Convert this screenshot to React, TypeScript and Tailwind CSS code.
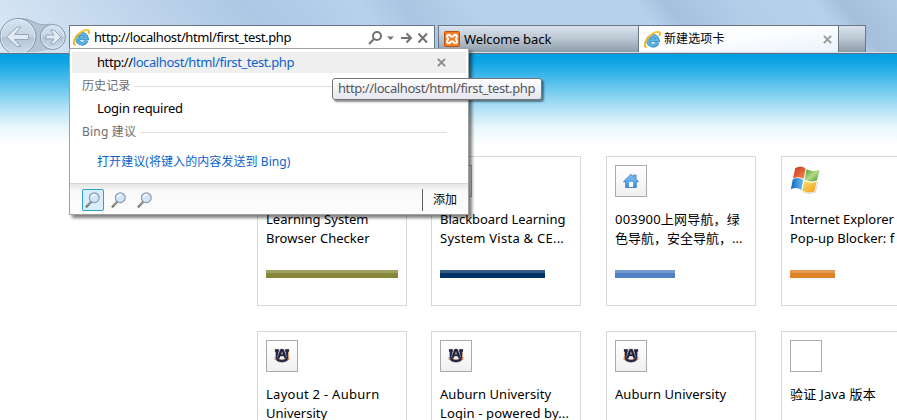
import React from 'react';

const FONT = "font-['Noto_Sans','Noto_Sans_CJK_SC',sans-serif]";

function IeIcon() {
  return (
    <svg width="17" height="17" viewBox="0 0 17 17" className="shrink-0">
      <path d="M13.6 11.6A4.900 4.900 0 1 1 13.9 9.300H5.2" fill="none" stroke="#2f86bd" strokeWidth="3.7" />
      <path d="M13.4 11.500A4.900 4.900 0 1 1 13.700 9.300H5.2" fill="none" stroke="#5fb6e4" strokeWidth="2.2" />
      <path d="M2.6 15.8C-.8 16 .6 9.6 5.3 5.2C9.6 1.1 15.2-.4 15.9 2.1C16.1 3 15.8 4 15.3 5" fill="none" stroke="#f3b51b" strokeWidth="1.9" />
      <path d="M5.5 4.7C9.5 1.2 14-.1 15.2 1.4" fill="none" stroke="#ffdf5c" strokeWidth=".9" />
    </svg>
  );
}

function XamppIcon() {
  return (
    <svg width="16" height="16" viewBox="0 0 16 16" className="shrink-0">
      <rect x=".5" y=".5" width="15" height="15" rx="1" fill="#f47b20" stroke="#bd5110" />
      <path d="M5.6 3.800C3.400 3.400 2.600 4.800 3.300 6.300L4.200 8L3.300 9.700C2.600 11.200 3.400 12.600 5.600 12.200L6.800 10.500H9.200L10.400 12.200C12.600 12.600 13.400 11.200 12.700 9.700L11.800 8L12.700 6.300C13.400 4.800 12.600 3.400 10.400 3.800L9.200 5.500H6.800Z" fill="none" stroke="#fff" strokeWidth="2" strokeLinejoin="round" />
    </svg>
  );
}

function AuburnIcon() {
  return (
    <svg width="16" height="16" viewBox="0 0 16 16">
      <g fill="none" strokeLinejoin="round">
        <path d="M.8 2.5H4.8M11.2 2.5H15.2M2.8 3V9.500Q2.8 13 8 13T13.2 9.500V3M4.3 9.8L7.2 2.3H8.8L11.7 9.8M.6 10.400H5.500M10.500 10.400H15.400" stroke="#d8936c" strokeWidth="3.200" />
        <path d="M1 2.500H4.800M11.200 2.500H15M3.100 3V9.500Q3.100 13 8 13T12.900 9.500V3" stroke="#1b2c50" strokeWidth="2.300" />
        <path d="M4.400 9.500L7 3M11.600 9.500L9 3" stroke="#d09a80" strokeWidth="3" />
        <path d="M4.500 9.800L7.300 2.100H8.700L11.500 9.800M5.600 7.300H10.400" stroke="#14284f" strokeWidth="2.100" />
        <path d="M6.100 9.800H9.900" stroke="#f8eee8" strokeWidth="2.400" />
      </g>
    </svg>
  );
}

function HomeIcon() {
  return (
    <svg width="16" height="16" viewBox="0 0 16 16">
      <defs>
        <linearGradient id="home" x2="0" y2="1"><stop stopColor="#86c5f7" /><stop offset="1" stopColor="#3f8ee0" /></linearGradient>
      </defs>
      <path d="M8 1.3L10.8 4V2H13V6.2L15.5 8.7H13.3V14.5H2.7V8.7H.5Z" fill="url(#home)" stroke="#4a86c8" />
      <path d="M6 9H10V14H6Z" fill="#fff" />
    </svg>
  );
}

function WindowsIcon() {
  return (
    <svg width="32" height="32" viewBox="0 0 32 32">
      <defs>
        <linearGradient id="wr" x2="1" y2="1"><stop stopColor="#c9341f" /><stop offset="1" stopColor="#f58a4e" /></linearGradient>
        <linearGradient id="wg" x2="1" y2="1"><stop stopColor="#3f9434" /><stop offset=".5" stopColor="#b5dc82" /><stop offset="1" stopColor="#3f9434" /></linearGradient>
        <linearGradient id="wb" x2="1" y2="0"><stop stopColor="#1269b9" /><stop offset="1" stopColor="#6cbcf0" /></linearGradient>
        <linearGradient id="wy" x2="1" y2="1"><stop stopColor="#ffe36a" /><stop offset="1" stopColor="#f19d1c" /></linearGradient>
      </defs>
      <path d="M5.2 3.3Q10.5-.200 15.700 3.400L13.600 14Q9.4 10.800 3 13.400Z" fill="url(#wr)" />
      <path d="M16.600 4.300Q22 7.300 29.700 4.700L27 15.300Q20.800 18 14.600 14.700Z" fill="url(#wg)" />
      <path d="M2.700 14.500Q8.500 11.400 13.300 15L11.300 25Q6.6 21.400.9 24.200Z" fill="url(#wb)" />
      <path d="M14.400 15.700Q20.800 19.300 26.700 16.400L24.400 26.400Q18.400 29 12.300 25.500Z" fill="url(#wy)" />
      <path d="M12.600 26.500Q18.600 30 25.300 27.200L27.900 16.200" fill="none" stroke="#000" strokeOpacity=".15" />
    </svg>
  );
}

function Magnifier() {
  return (
    <svg width="16" height="18" viewBox="0 0 16 18">
      <path d="M1.6 15.6L6.600 10.300" stroke="#77716e" strokeWidth="2.3" strokeLinecap="round" />
      <path d="M2 14.800L6.400 10.200" stroke="#cfc6c0" strokeWidth=".8" />
      <circle cx="9.3" cy="6.7" r="4.9" fill="#cfe6fb" stroke="#8f9bad" strokeWidth="1.2" />
      <path d="M6.5 6.2Q7.3 3.6 10 3.7" fill="none" stroke="#fff" strokeWidth="1.3" />
    </svg>
  );
}

function Cross({ size, color, weight }: { size: number; color: string; weight: number }) {
  return (
    <svg width={size} height={size} viewBox="0 0 10 10" className="shrink-0">
      <path d="M1 1L9 9M9 1L1 9" stroke={color} strokeWidth={weight} />
    </svg>
  );
}

function NavButtons() {
  return (
    <svg width="69" height="52" viewBox="0 0 69 52" className="shrink-0">
      <defs>
        <linearGradient id="nav" x2="0" y2="1">
          <stop stopColor="#d7e4f1" /><stop offset=".5" stopColor="#c4d3e3" /><stop offset=".52" stopColor="#b0c2d4" /><stop offset="1" stopColor="#cfdfee" />
        </linearGradient>
      </defs>
      <path d="M18 18Q29 19 36 23T53 24V49L36 52H18Z" fill="#a3b3c4" fillOpacity=".65" />
      <path d="M22 18.500Q29 19 35 22.500T50 24" fill="none" stroke="#9aabbd" />
      <circle cx="18" cy="36.500" r="18" fill="url(#nav)" stroke="#8495a8" />
      <circle cx="18" cy="36.500" r="16.800" fill="none" stroke="#e4eef7" strokeOpacity=".7" />
      <circle cx="52.800" cy="37" r="12.500" fill="url(#nav)" stroke="#8495a8" />
      <circle cx="52.800" cy="37" r="11.400" fill="none" stroke="#e4eef7" strokeOpacity=".7" />
      <path d="M6.500 37L17 27H21L14.500 34.500H28.500V39.500H14.500L21 46.500H17Z" fill="#e2ebf4" stroke="#98a7b8" strokeLinejoin="round" />
      <path d="M61 37L54 30H50.500L54 35H46V39H54L50.500 44H54Z" fill="#e2ebf4" stroke="#98a7b8" strokeLinejoin="round" />
    </svg>
  );
}

type Tile = { icon: React.ReactNode; frame: string; lines: { text: string; style: string }[]; bar?: string };

const FRAMED = 'flex size-8 items-center justify-center border border-[#aaa] bg-gradient-to-b from-white to-[#f0f0f0]';

const tiles: Tile[] = [
  { icon: null, frame: FRAMED, lines: [{ text: 'Learning System', style: 'tracking-[0.05px]' }, { text: 'Browser Checker', style: 'tracking-[0.03px]' }], bar: 'w-[132px] bg-[#87873a] border-[#9f9f61]' },
  { icon: null, frame: FRAMED, lines: [{ text: 'Blackboard Learning', style: 'tracking-[-0.04px]' }, { text: 'System Vista & CE...', style: 'tracking-[0.25px]' }], bar: 'w-[105px] bg-[#003366] border-[#335c85]' },
  { icon: <HomeIcon />, frame: FRAMED, lines: [{ text: '003900上网导航，绿', style: 'tracking-[0.2px]' }, { text: '色导航，安全导航，...', style: '' }], bar: 'w-[60px] bg-[#4f81c4] border-[#729ad0]' },
  { icon: <WindowsIcon />, frame: 'size-8', lines: [{ text: 'Internet Explorer', style: 'tracking-[-0.03px]' }, { text: 'Pop-up Blocker: f', style: '' }], bar: 'w-[45px] bg-[#dd8328] border-[#e49c53]' },
  { icon: <AuburnIcon />, frame: FRAMED, lines: [{ text: 'Layout 2 - Auburn', style: 'tracking-[0.27px]' }, { text: 'University', style: '' }] },
  { icon: <AuburnIcon />, frame: FRAMED, lines: [{ text: 'Auburn University', style: 'tracking-[0.05px]' }, { text: 'Login - powered by...', style: 'tracking-[0.13px]' }] },
  { icon: <AuburnIcon />, frame: FRAMED, lines: [{ text: 'Auburn University', style: 'tracking-[0.05px]' }] },
  { icon: null, frame: 'size-8 border border-[#aaa] bg-white', lines: [{ text: '验证 Java 版本', style: 'tracking-[0.25px]' }] },
];

function SiteTile({ tile }: { tile: Tile }) {
  return (
    <div className="h-[150px] w-[150px] border border-[#d8d8d8] bg-white px-2 pt-2">
      <div className={tile.frame}>{tile.icon}</div>
      <div className="mt-[13px] h-[60px] text-[13px] leading-[19px] whitespace-nowrap text-black">
        {tile.lines.map((l) => (
          <div key={l.text}><span className={l.style}>{l.text}</span></div>
        ))}
      </div>
      {tile.bar && <div className={`h-2 border-t-[3px] ${tile.bar}`} />}
    </div>
  );
}

function SectionLabel({ children }: { children: React.ReactNode }) {
  return (
    <div className="flex h-[18px] items-center gap-[4px] pr-[21px] pl-3 whitespace-nowrap text-[#6d6d6d]">
      {children}
      <div className="h-px grow bg-[#e0e0e0]" />
    </div>
  );
}

function SuggestionPopup() {
  return (
    <div className="absolute top-[48px] left-[69px] flex h-[167px] w-[400px] flex-col border border-[#a0a0a0] bg-white text-[12px] shadow-[3px_3px_3px_rgba(0,0,0,0.5)]">
      <div className="mx-[2px] mt-[3px] flex h-[21px] items-center justify-between bg-[#efefef] pr-[20px] pl-[25px]">
        <span className="text-[13px] tracking-[-0.41px] text-black">http://<span className="text-[#0a63cc]">localhost/html/first_test.php</span></span>
        <Cross size={9} color="#8c8c8c" weight={2.2} />
      </div>
      <div className="mt-[4px]"><SectionLabel><span className="tracking-[0.1px]">历史记录</span></SectionLabel></div>
      <div className="mt-[4px] flex h-5 items-center pl-[27px] text-[13px] text-black"><span className="tracking-[-0.28px]">Login required</span></div>
      <div className="mt-[4px]"><SectionLabel><span className="tracking-[0.2px]">Bing 建议</span></SectionLabel></div>
      <div className="mt-[11px] flex h-5 items-center pl-[27px] text-[#0a63cc]"><span className="tracking-[0.07px]">打开建议(将键入的内容发送到 Bing)</span></div>
      <div className="mt-auto flex h-[31px] items-center border-t border-[#d6d6d6] bg-gradient-to-b from-[#e6e6e6] via-[#fafafa] via-25% to-[#fcfcfc] pt-px pl-3">
        <div className="flex size-[22px] items-center justify-center rounded-[2px] border border-[#2f9fd0] bg-[#d6effb]"><Magnifier /></div>
        <div className="ml-1 flex size-[22px] items-center justify-center"><Magnifier /></div>
        <div className="ml-1 flex size-[22px] items-center justify-center"><Magnifier /></div>
        <div className="ml-auto flex h-[22px] w-[46px] items-center border-l border-[#606060] pl-[10px] text-black"><span>添加</span></div>
      </div>
    </div>
  );
}

export default function App() {
  return (
    <div className={`relative h-[420px] w-[897px] overflow-hidden bg-white ${FONT}`}>
      <header className="h-[54px] border-b border-[#5f7184] bg-[linear-gradient(52deg,#d9e7f5_0%,#c8dbef_12%,#adc8e4_30%,#b0cbe7_35%,#b7d2ec_42%,#a9c5e1_47%,#b5d1eb_54%,#b5d1eb_72%,#a5c1de_75%,#b2cee9_83%,#b5d1ec_91%,#a5bfdb_94%,#b0cbe6_100%)]">
        <div className="flex h-[53px] items-end border-b border-[#d3dee8]">
          <NavButtons />
          <div className="mb-[2px] flex h-[25px] w-[366px] items-center border border-[#687685] bg-white pr-[4px] pl-[3px]">
            <IeIcon />
            <span className="ml-[4px] text-[13px] tracking-[-0.41px] whitespace-nowrap text-black">http://localhost/html/first_test.php</span>
            <div className="ml-auto flex items-center">
              <svg width="63" height="16" viewBox="0 0 63 16" fill="none" stroke="#727272" strokeWidth="2">
                <circle cx="10" cy="6" r="4" /><path d="M7 9L2 14" />
                <path d="M20 6.500H27L23.500 10Z" fill="#727272" stroke="none" />
                <path d="M34 8H44M39.500 3.500L44 8L39.500 12.500" />
                <path d="M51.500 3.500L60 12.500M60 3.500L51.500 12.500" />
              </svg>
            </div>
          </div>
          <div className="ml-[3px] flex h-[27px] w-[201px] items-center border border-b-0 border-[#687685] bg-gradient-to-b from-[#dbe4ed] via-[#b9c5d1] to-[#8e9da9] pl-[5px]">
            <XamppIcon />
            <span className="mt-px ml-[4px] text-[13px] tracking-[-0.05px] text-black">Welcome back</span>
          </div>
          <div className="flex h-[27px] w-[200px] items-center border-t border-r border-[#687685] bg-gradient-to-br from-white via-[#fbfdff] to-[#eaf2fc] pr-[6px] pl-[5px]">
            <IeIcon />
            <span className="ml-[3px] text-[12px] tracking-[0.1px] text-black">新建选项卡</span>
            <span className="ml-auto"><Cross size={9} color="#9a9a9a" weight={2.2} /></span>
          </div>
          <div className="h-[27px] w-[27px] border-t border-r border-[#687685] bg-gradient-to-b from-[#dbe4ed] via-[#b9c5d1] to-[#8e9da9]" />
        </div>
      </header>
      <main className="h-[366px] bg-[linear-gradient(to_bottom,#009ee3_0px,#10a4e4_8px,#5bc2ed_30px,#b4e3f7_55px,#e6f6fc_72px,#fff_90px)] pt-[102px] pl-[257px]">
        <div className="grid w-[675px] grid-cols-[174px_175px_175px_150px] gap-y-[25px]">
          {tiles.map((t, i) => <SiteTile key={i} tile={t} />)}
        </div>
      </main>
      <SuggestionPopup />
      <div className="absolute top-[78px] left-[332px] flex h-[22px] w-[210px] items-center rounded-[3px] border border-[#767676] bg-gradient-to-b from-white to-[#e4e5f0] pl-[5px] text-[13px] tracking-[-0.41px] whitespace-nowrap text-[#575757] shadow-[2px_2px_2px_rgba(0,0,0,0.45)]">
        <span>http://localhost/html/first_test.php</span>
      </div>
    </div>
  );
}
